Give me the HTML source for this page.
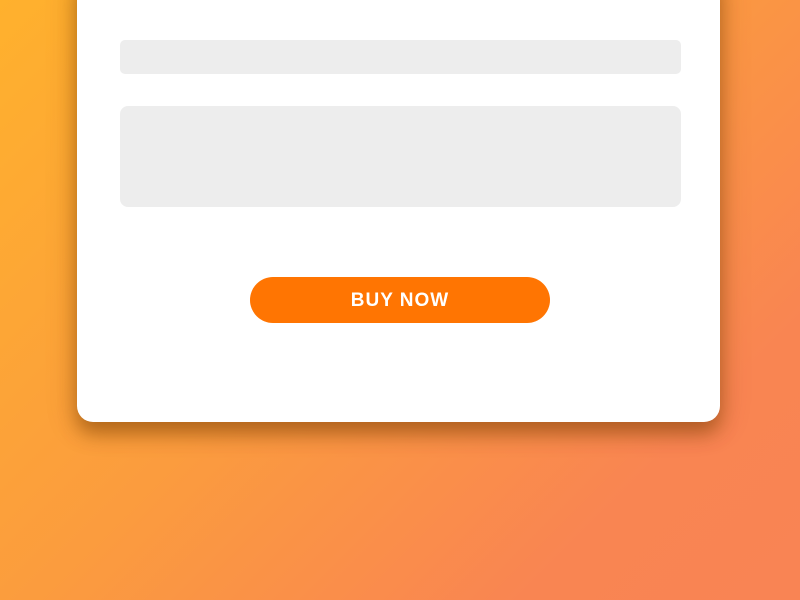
<!DOCTYPE html>
<html><head><style>
html,body{margin:0;padding:0;width:800px;height:600px;overflow:hidden}
body{background:linear-gradient(135deg,#ffb12d 0%,#fb9c3e 45%,#f98552 80%,#f98454 100%);position:relative;font-family:"Liberation Sans",sans-serif}
.card{position:absolute;left:77px;top:-30px;width:643px;height:452px;background:#fff;border-radius:16px;box-shadow:0 12px 18px rgba(120,60,0,0.45),0 4px 30px rgba(120,60,0,0.25)}
.in{position:absolute;background:#ededed;border-radius:5px}
.btn{position:absolute;left:250px;top:277px;width:300px;height:46px;background:#ff7502;border-radius:23px;color:#fff;font-weight:bold;font-size:19px;letter-spacing:1px;text-align:center;line-height:48px}
</style></head><body>
<div class="card"></div>
<div class="in" style="left:120px;top:40px;width:561px;height:34px"></div>
<div class="in" style="left:120px;top:106px;width:561px;height:101px;border-radius:8px"></div>
<div class="btn">BUY NOW</div>
</body></html>
